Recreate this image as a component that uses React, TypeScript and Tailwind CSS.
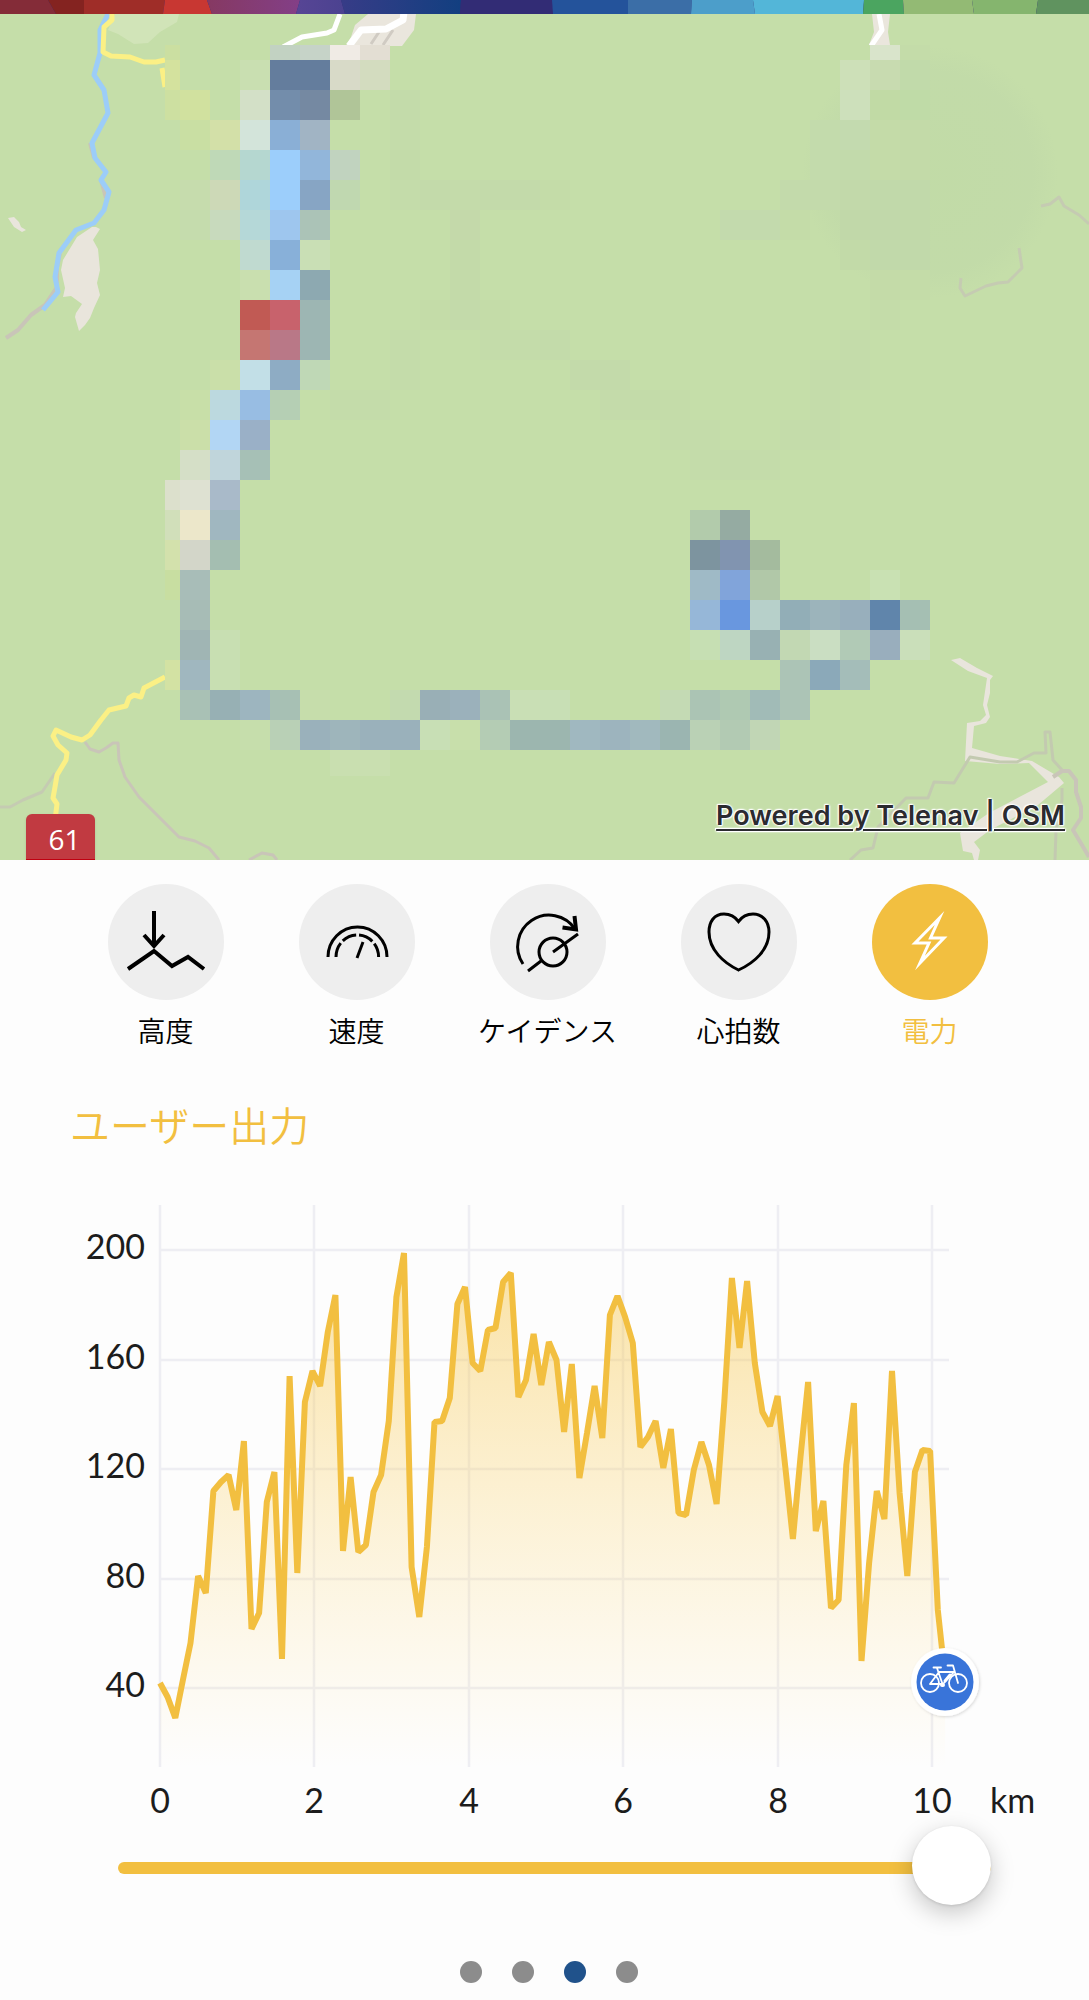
import React, { useState } from "react";

const STRIP: [string, string][] = [
  ["0,0 48,0 56,14 0,14", "#842c38"],
  ["48,0 84,0 84,14 56,14", "#842320"],
  ["84,0 165,0 163,14 84,14", "#9f2d28"],
  ["165,0 207,0 212,14 163,14", "#c83732"],
  ["207,0 300,0 296,14 212,14", "url(#purple)"],
  ["300,0 341,0 345,14 296,14", "url(#violet)"],
  ["341,0 461,0 460,14 345,14", "url(#navy)"],
  ["461,0 553,0 553,14 460,14", "#322c75"],
  ["552,0 628,0 628,14 553,14", "#24539b"],
  ["628,0 692,0 691,14 628,14", "#3b6ea7"],
  ["692,0 753,0 755,14 691,14", "#4c9eca"],
  ["753,0 864,0 863,14 755,14", "#53b6d8"],
  ["864,0 903,0 904,14 863,14", "#4ba560"],
  ["903,0 972,0 974,14 904,14", "#93ba74"],
  ["972,0 1038,0 1036,14 974,14", "#85b56e"],
  ["1038,0 1089,0 1089,14 1036,14", "#60935f"],
];

/* Privacy mosaic: row index -> [column, colour] pairs on a 30-unit grid. */
const MOSAIC: Record<number, [number, string][]> = {
  1: [[5, "#cbdfa1"], [9, "#c2d2c2"], [10, "#c6d3c8"], [11, "#f0ebe5"], [12, "#e3ded3"], [29, "#d9e4cb"], [30, "#c4dca9"]],
  2: [[5, "#d4e29e"], [8, "#c9dfb1"], [9, "#647d9d"], [10, "#647d9d"], [11, "#d8dac8"], [12, "#d3dcbf"], [28, "#cde0b8"], [29, "#c8dbb0"], [30, "#c1daaa"]],
  3: [[5, "#cde0a1"], [6, "#d1e19f"], [8, "#d3e0c7"], [9, "#738dab"], [10, "#7589a2"], [11, "#b0c598"], [13, "#c3dbaa"], [28, "#cde0bb"], [29, "#c1daa5"], [30, "#bfdba7"]],
  4: [[6, "#c9dfa3"], [7, "#d3e0a8"], [8, "#d3e4da"], [9, "#8aafd6"], [10, "#a1b4c4"], [13, "#c4dcaa"], [27, "#c3dbac"], [28, "#c3daaf"], [29, "#c4dba8"], [30, "#c3daa8"]],
  5: [[7, "#bfd9b7"], [8, "#b5d7d0"], [9, "#9ccefb"], [10, "#92b6da"], [11, "#c1d3bf"], [13, "#c3dba9"], [27, "#c3dbac"], [28, "#c2daab"], [29, "#c4dba8"], [30, "#c3daa8"]],
  6: [[6, "#c6dcad"], [7, "#cdd9b7"], [8, "#afd6da"], [9, "#9ccefb"], [10, "#87a5c4"], [11, "#c0d8b0"], [13, "#c4dcaa"], [14, "#c3daaa"], [15, "#c4dbaa"], [16, "#c3daaa"], [17, "#c3daaa"], [18, "#c4dca8"], [26, "#c3daab"], [27, "#c3daab"], [28, "#c2d9aa"], [29, "#c1d9aa"], [30, "#c1d9aa"]],
  7: [[6, "#c5dcad"], [7, "#c8dabd"], [8, "#b5d8d8"], [9, "#9ec6ee"], [10, "#abc3b7"], [15, "#c4d9aa"], [24, "#c3daad"], [25, "#c3daad"], [26, "#c4dca8"], [28, "#c1d8a9"], [29, "#c1d8aa"], [30, "#c1d9a9"]],
  8: [[8, "#c0dad0"], [9, "#88b0d9"], [10, "#c9dfb5"], [15, "#c3daa9"], [28, "#c2daa8"], [29, "#c1d9aa"], [30, "#c1d9aa"]],
  9: [[8, "#c9dfaf"], [9, "#a6d2f4"], [10, "#8da9b1"], [15, "#c3daa9"], [29, "#c4dba8"], [30, "#c4dca8"]],
  10: [[8, "#c15a54"], [9, "#c8626c"], [10, "#9db6b3"], [14, "#c4dca8"], [15, "#c3daaa"], [16, "#c4dca8"], [29, "#c4dca9"]],
  11: [[8, "#c57672"], [9, "#b97887"], [10, "#9db6b3"], [13, "#c4dcaa"], [16, "#c4dcaa"], [17, "#c4dcaa"], [18, "#c3dbaa"], [28, "#c4dcaa"]],
  12: [[7, "#cadfa9"], [8, "#c2dfe7"], [9, "#8eacc4"], [10, "#bfd8b6"], [13, "#c4dcaa"], [19, "#c3daaa"], [20, "#c3daaa"], [27, "#c4dcaa"], [28, "#c4dcaa"]],
  13: [[6, "#c8dfa8"], [7, "#bcd9df"], [8, "#98bde3"], [9, "#b5cfb4"], [11, "#c4dcaa"], [12, "#c4dcaa"], [20, "#c4dbaa"], [21, "#c3dba9"], [22, "#c4dca9"], [27, "#c4dcaa"]],
  14: [[6, "#cbdfa9"], [7, "#b2d6f4"], [8, "#9ab0c7"], [22, "#c4dcaa"], [23, "#c4dcaa"], [26, "#c4dcaa"], [27, "#c4dcaa"]],
  15: [[6, "#d5dfc7"], [7, "#c0d5db"], [8, "#a6c0b6"], [23, "#c4dcaa"], [24, "#c3dbaa"], [25, "#c4dcaa"]],
  16: [[5, "#dce0cc"], [6, "#dee1d2"], [7, "#a9bac9"]],
  17: [[5, "#d1dfba"], [6, "#ece7ca"], [7, "#a0b7c0"], [23, "#b2cbab"], [24, "#95aba2"]],
  18: [[5, "#d3e1ac"], [6, "#d3d6c9"], [7, "#a4beb1"], [23, "#7d949f"], [24, "#8194b0"], [25, "#a4bb9e"]],
  19: [[5, "#c8dea1"], [6, "#a8bdb8"], [23, "#9fbac6"], [24, "#81a4da"], [25, "#b1c8a8"], [29, "#c9e1b3"]],
  20: [[6, "#a7bcb6"], [23, "#96b7d8"], [24, "#6997df"], [25, "#b7d0ca"], [26, "#92aeb7"], [27, "#9cb4bb"], [28, "#98afbc"], [29, "#6085ab"], [30, "#a5bfb3"]],
  21: [[6, "#a0b5b4"], [7, "#c8dfb2"], [23, "#c6dfb3"], [24, "#bed6c2"], [25, "#98b1b3"], [26, "#c2d8b3"], [27, "#cadec2"], [28, "#b1cab6"], [29, "#99aebd"], [30, "#cadfba"]],
  22: [[5, "#d3e2a3"], [6, "#a0b7bf"], [7, "#c8dfb2"], [26, "#acc4b6"], [27, "#8ba9b9"], [28, "#a4bdb9"]],
  23: [[6, "#a9c1b5"], [7, "#97b0b4"], [8, "#9db5bf"], [9, "#a7c0b4"], [10, "#c6ddab"], [13, "#c3daaf"], [14, "#99afb6"], [15, "#9bb1bb"], [16, "#aac2b5"], [17, "#c9dfb5"], [18, "#c8dfb5"], [22, "#c4dab4"], [23, "#abc4b4"], [24, "#afc9b2"], [25, "#a1bbb7"], [26, "#acc4b6"]],
  24: [[8, "#c6deac"], [9, "#b9d0b6"], [10, "#9ab1bb"], [11, "#9eb5bb"], [12, "#9ab1bb"], [13, "#9ab1bb"], [14, "#c8dfb5"], [15, "#c8dfab"], [16, "#b4ccb4"], [17, "#9cb6af"], [18, "#9cb6af"], [19, "#a0b8c0"], [20, "#9db4be"], [21, "#a1b9be"], [22, "#9bb5b1"], [23, "#bad1b5"], [24, "#b2cab3"], [25, "#c1d6b5"]],
  25: [[11, "#c9dfb0"], [12, "#c9dfb0"]],
};

function ColourStrip() {
  return (
    <svg viewBox="0 0 1089 14" className="block w-full bg-[#322c75]" aria-hidden="true">
      <defs>
        <linearGradient id="purple">
          <stop offset="0" stopColor="#863962" />
          <stop offset="1" stopColor="#833f87" />
        </linearGradient>
        <linearGradient id="violet">
          <stop offset="0" stopColor="#574595" />
          <stop offset="1" stopColor="#4b4290" />
        </linearGradient>
        <linearGradient id="navy">
          <stop offset="0" stopColor="#373c87" />
          <stop offset="1" stopColor="#123f80" />
        </linearGradient>
      </defs>
      {STRIP.map(([points, fill]) => (
        <polygon key={points} points={points} fill={fill} />
      ))}
    </svg>
  );
}

function RouteMap() {
  return (
    <section aria-label="Route map" className="relative overflow-hidden bg-[#c5dea9]">
      <svg viewBox="0 14 1089 846" className="block w-full" aria-hidden="true">
        <defs>
          <radialGradient id="shade">
            <stop offset="0" stopColor="#bfd9a5" stopOpacity=".6" />
            <stop offset=".8" stopColor="#bfd8a8" stopOpacity=".5" />
            <stop offset="1" stopColor="#bfd8a8" stopOpacity="0" />
          </radialGradient>
        </defs>
        <rect y="14" width="1089" height="846" fill="#c5dea9" />
        <ellipse cx="930" cy="172" rx="128" ry="126" fill="url(#shade)" />
        <path d="M115 14L108 30L118 34L134 44L148 43L160 32L177 22L179 14Z" fill="#d1e4b8" />
        <path d="M368 14L355 25L351 37L346 46L402 46L414 30L416 14ZM872 14H890L888 32L890 45H869L874 32Z" fill="#eae6dd" />
        <path d="M8 218L14 217L19 222L21 227L26 230L22 232L14 227ZM92 227L96 227L100 229L93 240L98 249L100 270L97 283L100 295L94 308L90 318L85 325L79 331L75 317L76 313L82 304L71 296L63 297L65 288L61 270L63 260L77 237Z" fill="#e9e5dc" />
        <path d="M951 660L960 658L977 668L993 676L990 680V693L987 705L990 717L986 723L974 726L972 748L1000 756L1032 761L1059 777L1064 783L1038 805L990 830L974 842L980 850L978 860H974L972 853L963 851L960 833L989 813L1048 782L1029 763L1000 764L965 761L967 723L980 721L986 715L983 705L987 678L968 671Z" fill="#e9e5dc" />
        <g fill="none" strokeLinejoin="round">
          <path d="M60 253L57 267V287L45 305L31 315L18 330L6 338M101 180L106 198M90 143L94 158" stroke="#c9c5b8" strokeWidth="4" />
          <path d="M85 742L90 749L99 752L106 748L113 743H118L119 760L125 777L139 797L179 837L195 841L209 848L219 860M249 860L262 853L273 855L277 860" stroke="#c9c5b8" strokeWidth="3" />
          <path d="M55 773L42 792L23 800L10 807H0M1019 248L1022 268L1008 282L998 283L986 286L965 296L960 288L961 278M1041 206L1050 204L1059 197L1064 206L1079 215L1089 224" stroke="#c5cbb2" strokeWidth="3" />
          <path d="M1062 770L1053 760L1050 732H1045L1046 753H1034L1017 762H1000L970 757L954 783L934 782L928 798H906L878 827L873 848L861 850L850 860M1062 788L1062 800L1056 830L1055 860" stroke="#c3cab0" strokeWidth="3" />
          <path d="M1053 777L1062 771H1069L1076 780V792L1081 807V818L1073 830L1082 845L1089 857" stroke="#c9c5b8" strokeWidth="4" />
          <path d="M379 32L371 44M393 30L383 45" stroke="#d0cbc3" strokeWidth="3" />
          <path d="M108 14L100 30V53L94 75L104 90L108 113L92 143L95 158L106 172L101 180L109 192L104 210L94 223L76 230L59 253L55 277L58 292L43 310" stroke="#9ccdf8" strokeWidth="5" />
          <path d="M340 14L334 30L327 33L302 37L283 47M879 14L882 30L871 46" stroke="#fff" strokeWidth="5" />
          <path d="M404 12L403 20L386 29L361 30L349 46" stroke="#fff" strokeWidth="7" />
          <path d="M112 14V20L104 27L103 52L111 56L130 57L144 62H156L165 60M162 68L165 87M165 677L144 688L141 697L134 695L129 698L126 706L109 710L101 720L90 735L82 740L71 737L56 730L53 736L58 745L67 753L66 760L57 775L55 787L53 798L57 804L55 820" stroke="#fbf085" strokeWidth="5" />
        </g>
        <g shapeRendering="crispEdges">
          {Object.entries(MOSAIC).map(([row, cells]) =>
            cells.map(([col, fill]) => {
              const r = Number(row);
              const x = Math.max(165, col * 30);
              const y = Math.max(45, r * 30);
              return (
                <rect
                  key={`${row}-${col}`}
                  x={x}
                  y={y}
                  width={col * 30 + 30 - x}
                  height={(r === 25 ? 776 : r * 30 + 30) - y}
                  fill={fill}
                />
              );
            }),
          )}
        </g>
      </svg>
      <span className="absolute bottom-0 left-[26px] flex h-[46px] w-[69px] items-center justify-center rounded-t-md border-b border-[#c00010] bg-[#c13a41] pt-1 pl-2 font-['Open_Sans'] text-[28px] leading-8 text-white shadow-sm">
        61
      </span>
      <a
        href="#osm"
        className="absolute right-6 bottom-[26px] font-['Inter'] text-[27px] leading-9 font-semibold text-[#2b2b30] underline decoration-2 underline-offset-4 [text-shadow:0_0_2px_white,0_0_2px_white,0_0_3px_white,1px_1px_1px_white,-1px_-1px_1px_white]"
      >
        Powered by Telenav | OSM
      </a>
    </section>
  );
}

const METRICS = [
  {
    label: "高度",
    icon: (
      <g strokeWidth="4">
        <path d="M46 27V61M36 51L46 62L56 51" />
        <path d="M20 85L46 67L64 82L80 73L96 85" />
      </g>
    ),
  },
  {
    label: "速度",
    icon: (
      <g strokeWidth="3">
        <path d="M29 73A29.5 30 0 0 1 88 73" />
        <path d="M37 73A21.3 22 0 0 1 79.600 73" strokeDasharray="14.800 3" />
        <path d="M58 74L64 58" />
      </g>
    ),
  },
  {
    label: "ケイデンス",
    icon: (
      <g strokeWidth="3">
        <path d="M33 80A31 31 0 1 1 85 45" />
        <path d="M84.500 32L86 45.500L72.500 43.500" strokeWidth="4" />
        <circle cx="63" cy="68" r="14" />
        <path d="M63 68L88 50M51 77L38 87" />
      </g>
    ),
  },
  {
    label: "心拍数",
    icon: (
      <path
        strokeWidth="3"
        d="M57.500 37.500C53.500 32 48 30 43 30C33 30 28 38 28 48C28 66 43 79 57.500 86C73 79 88 66 88 48C88 38 82 30 72 30C67 30 61.500 32 57.500 37.500Z"
      />
    ),
  },
  {
    label: "電力",
    icon: <path strokeWidth="3" strokeMiterlimit="8" d="M67.500 34L43 59H57L48 79L72 54H58.500Z" />,
  },
];

function MetricTabs() {
  const [active, setActive] = useState(4);
  return (
    <nav aria-label="Metrics" className="grid grid-cols-5 pt-6 pr-16 pl-[70px]">
      {METRICS.map((metric, i) => (
        <button
          key={metric.label}
          type="button"
          aria-pressed={active === i}
          onClick={() => setActive(i)}
          className={`flex flex-col items-center gap-3 text-[28px] leading-9 font-[350] whitespace-nowrap ${
            active === i ? "text-[#f2bf40]" : "text-black"
          }`}
        >
          <span
            className={`size-[116px] rounded-full ${
              active === i ? "bg-[#f2bf40] text-white" : "bg-[#eeeeee] text-black"
            }`}
          >
            <svg viewBox="0 0 116 116" className="size-full" fill="none" stroke="currentColor" aria-hidden="true">
              {metric.icon}
            </svg>
          </span>
          {metric.label}
        </button>
      ))}
    </nav>
  );
}

/* One sample every 7.625 units, as heights on the chart's own vertical scale. */
const SAMPLES = [
  1683, 1697, 1718, 1680, 1643, 1576, 1593, 1491, 1482, 1475, 1510, 1441, 1629, 1613, 1502, 1472, 1659, 1376,
  1573, 1402, 1371, 1386, 1332, 1295, 1551, 1477, 1552, 1545, 1492, 1475, 1421, 1297, 1253, 1567, 1617, 1547,
  1422, 1421, 1398, 1304, 1287, 1363, 1371, 1330, 1328, 1282, 1273, 1397, 1380, 1334, 1385, 1342, 1360, 1432,
  1364, 1478, 1433, 1386, 1438, 1315, 1296, 1317, 1343, 1447, 1437, 1421, 1468, 1429, 1513, 1515, 1470, 1442,
  1465, 1504, 1402, 1278, 1348, 1281, 1363, 1412, 1426, 1396, 1467, 1539, 1457, 1382, 1531, 1501, 1608, 1600,
  1465, 1403, 1661, 1563, 1491, 1519, 1371, 1493, 1576, 1472, 1450, 1451, 1610, 1680,
];

const X_TICKS = [0, 2, 4, 6, 8, 10];
const Y_TICKS = [200, 160, 120, 80, 40];

function PowerChart() {
  const points = SAMPLES.map((y, i) => `${(160 + i * 7.625).toFixed(1)},${y}`).join(" ");
  const xOf = (km: number) => Math.round(160 + km * 77.2);
  const yOf = (watt: number) => Math.round(1250 + (200 - watt) * 2.74);
  return (
    <svg
      viewBox="0 1200 1089 628"
      className="mt-[46px] block w-full"
      role="img"
      aria-label="ユーザー出力"
      fontFamily="Lato, sans-serif"
      fontSize="34"
      fill="#1c1c1c"
    >
      <defs>
        <linearGradient id="power" gradientUnits="userSpaceOnUse" x1="0" y1="1250" x2="0" y2="1767">
          <stop offset="0" stopColor="#f5c242" stopOpacity=".48" />
          <stop offset="1" stopColor="#ffd76a" stopOpacity="0" />
        </linearGradient>
        <filter id="lift" x="-30%" y="-30%" width="160%" height="160%">
          <feDropShadow dx="1" dy="1" stdDeviation="1.500" floodOpacity=".15" />
        </filter>
      </defs>
      <g stroke="#eeeef3" strokeWidth="2.500">
        {X_TICKS.map((km) => (
          <line key={km} x1={xOf(km)} x2={xOf(km)} y1="1205" y2="1767" />
        ))}
        {Y_TICKS.map((watt) => (
          <line key={watt} x1="160" x2="949" y1={yOf(watt)} y2={yOf(watt)} />
        ))}
      </g>
      <polygon points={`160,1767 ${points} 945,1767`} fill="url(#power)" />
      <polyline points={points} fill="none" stroke="#f2bf40" strokeWidth="6" strokeLinejoin="bevel" />
      {Y_TICKS.map((watt) => (
        <text key={watt} x="145" y={yOf(watt) + 9} textAnchor="end">
          {watt}
        </text>
      ))}
      {X_TICKS.map((km) => (
        <text key={km} x={xOf(km)} y="1813" textAnchor="middle">
          {km}
        </text>
      ))}
      <text x="990" y="1813">km</text>
      <circle cx="945" cy="1682" r="34" fill="#fff" filter="url(#lift)" />
      <circle cx="945" cy="1682" r="28.500" fill="#3974d9" />
      <g fill="none" stroke="#fff" strokeWidth="1.800" strokeLinecap="round" strokeLinejoin="round">
        <circle cx="930" cy="1683" r="9" />
        <circle cx="958" cy="1683" r="9" />
        <path d="M933.500 1667.500H941M937 1668L942.500 1684H930L939 1672H954L943 1684M947.500 1665.500H953L958 1683" />
        <path d="M950 1675L945 1681" strokeWidth="3" />
        <path d="M942 1685H943" strokeWidth="4" />
      </g>
    </svg>
  );
}

function PageDots() {
  const [page, setPage] = useState(2);
  return (
    <div className="mt-[53px] flex justify-center gap-[30px] pl-2">
      {[0, 1, 2, 3].map((i) => (
        <button
          key={i}
          type="button"
          aria-label={`Page ${i + 1}`}
          aria-current={page === i}
          onClick={() => setPage(i)}
          className={`size-[22px] rounded-full ${page === i ? "bg-[#20528b]" : "bg-[#8c8c8c]"}`}
        />
      ))}
    </div>
  );
}

export default function App() {
  return (
    <main className="min-h-screen bg-[#fdfdfd] font-['Noto_Sans_CJK_JP',sans-serif]">
      <ColourStrip />
      <RouteMap />
      <MetricTabs />
      <h2 className="mt-[46px] pl-[70px] text-[40px] leading-[60px] font-[350] text-[#f2bf40]">ユーザー出力</h2>
      <PowerChart />
      <div className="pr-[98px] pl-[118px]">
        <input
          type="range"
          aria-label="Distance"
          min={0}
          max={100}
          defaultValue={100}
          className="block h-20 w-full cursor-pointer appearance-none bg-transparent [&::-webkit-slider-runnable-track]:h-3 [&::-webkit-slider-runnable-track]:rounded-full [&::-webkit-slider-runnable-track]:bg-[#f2bf40] [&::-webkit-slider-thumb]:-mt-9 [&::-webkit-slider-thumb]:size-[79px] [&::-webkit-slider-thumb]:appearance-none [&::-webkit-slider-thumb]:rounded-full [&::-webkit-slider-thumb]:bg-white [&::-webkit-slider-thumb]:shadow-[0_8px_24px_rgba(0,0,0,0.22),0_1px_3px_rgba(0,0,0,0.12)]"
        />
      </div>
      <PageDots />
    </main>
  );
}
